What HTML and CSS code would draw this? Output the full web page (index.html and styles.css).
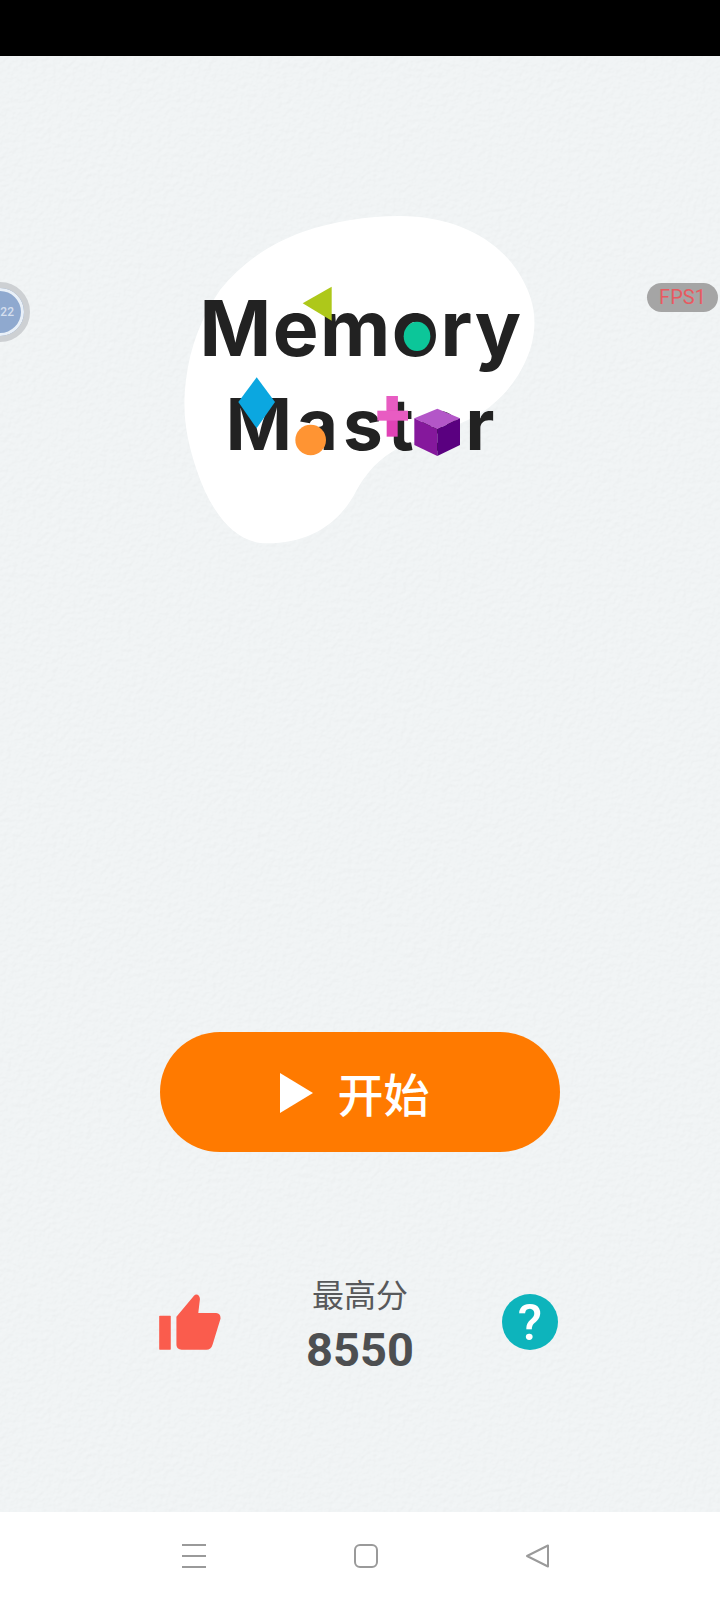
FILE: index.html
```html
<!DOCTYPE html>
<html lang="zh-CN">
<head>
    <meta charset="UTF-8">
    <meta name="viewport" content="width=device-width, initial-scale=1.0">
    <title>Memory Master</title>
    <link rel="stylesheet" href="styles.css">
</head>
<body>
    <div class="status-bar"></div>

    <main class="game">
        <svg class="paper" xmlns="http://www.w3.org/2000/svg" aria-hidden="true">
            <filter id="paperGrain" x="0" y="0" width="100%" height="100%">
                <feTurbulence type="fractalNoise" baseFrequency="0.2" numOctaves="3" seed="4" result="noise"/>
                <feDiffuseLighting in="noise" lighting-color="#f1f4f5" surfaceScale="0.5" diffuseConstant="1.06">
                    <feDistantLight azimuth="60" elevation="70"/>
                </feDiffuseLighting>
            </filter>
            <rect width="100%" height="100%" filter="url(#paperGrain)"/>
        </svg>

        <div class="float-ball"><span class="float-ball-num">22</span></div>
        <div class="fps">FPS1</div>

        <div class="logo">
            <svg class="logo-blob" viewBox="0 0 1140 1050" xmlns="http://www.w3.org/2000/svg" aria-hidden="true">
                <path fill="#ffffff" d="M690 48 C850 48 985 115 1050 225 C1095 300 1105 370 1080 450 C1055 520 1020 570 960 620 C900 665 800 700 720 730 C650 755 600 800 560 870 C510 970 420 1030 290 1030 C190 1030 120 930 80 810 C50 720 35 640 48 540 C60 440 95 350 150 270 C215 190 300 130 400 95 C490 65 590 48 690 48 Z"/>
            </svg>
            <h1 class="logo-title">
                <span class="logo-line logo-line-top">Memory</span>
                <span class="logo-line logo-line-bottom">Master</span>
            </h1>
            <svg class="logo-shapes" viewBox="0 0 1140 1050" xmlns="http://www.w3.org/2000/svg" aria-hidden="true">
                <polygon fill="#aec81a" points="398,310 485,260 485,362"/>
                <ellipse fill="#0cc699" cx="741" cy="409" rx="40" ry="44"/>
                <polygon fill="#0ba7e0" points="260,532 315,606 260,685 205,606"/>
                <circle fill="#ff9433" cx="422" cy="720" r="46"/>
                <rect fill="#e042b5" x="650" y="588" width="33" height="122"/>
                <rect fill="#e85cc2" x="622" y="632" width="92" height="30"/>
                <rect fill="#e85cc2" x="650" y="588" width="33" height="44"/>
                <polygon fill="#b356c8" points="733,655 802,626 870,655 802,688"/>
                <polygon fill="#85189c" points="733,655 802,688 802,768 733,735"/>
                <polygon fill="#5a0080" points="802,688 870,655 870,735 802,768"/>
            </svg>
        </div>

        <button class="start-btn" type="button">
            <svg class="start-icon" viewBox="0 0 33 40" xmlns="http://www.w3.org/2000/svg" aria-hidden="true">
                <polygon fill="#ffffff" points="0,0 33,20 0,40"/>
            </svg>
            <span>开始</span>
        </button>

        <div class="score-row">
            <svg class="thumb" viewBox="58 103 186 169" xmlns="http://www.w3.org/2000/svg" aria-hidden="true">
                <rect fill="#fa5c4d" x="58" y="169" width="35" height="102" rx="2"/>
                <path fill="#fa5c4d" d="M110 172 L163 108 C170 100 181 106 181 118 L176 160 L230 160 C240 160 244 168 243 178 L219 256 C216 266 210 271 200 271 L126 271 C116 271 110 265 110 255 Z"/>
            </svg>
            <div class="score">
                <div class="score-label">最高分</div>
                <div class="score-value">8550</div>
            </div>
            <div class="help">?</div>
        </div>
    </main>

    <nav class="nav-bar">
        <svg class="nav-icon" viewBox="0 0 26 26" xmlns="http://www.w3.org/2000/svg" aria-hidden="true">
            <path fill="none" stroke="#9a9a9a" stroke-width="2" d="M1 2 H25 M1 13 H25 M1 24 H25"/>
        </svg>
        <svg class="nav-icon" viewBox="0 0 26 26" xmlns="http://www.w3.org/2000/svg" aria-hidden="true">
            <rect fill="none" stroke="#9a9a9a" stroke-width="2" x="2" y="2" width="22" height="22" rx="5"/>
        </svg>
        <svg class="nav-icon" viewBox="0 0 26 26" xmlns="http://www.w3.org/2000/svg" aria-hidden="true">
            <path fill="none" stroke="#9a9a9a" stroke-width="2" stroke-linejoin="round" d="M2 13 L23 2.5 V23.5 Z"/>
        </svg>
    </nav>
</body>
</html>
```

FILE: styles.css
```css
html, body {
    margin: 0;
    padding: 0;
}

body {
    width: 720px;
    height: 1600px;
    display: flex;
    flex-direction: column;
    overflow: hidden;
    background-color: #fff;
    font-family: "Noto Sans", "Noto Sans CJK SC", sans-serif;
}

.status-bar {
    height: 56px;
    background-color: #000;
}

.game {
    position: relative;
    height: 1456px;
    padding-top: 144px;
    box-sizing: border-box;
    display: flex;
    flex-direction: column;
    align-items: center;
    background-color: #f1f4f5;
    overflow: hidden;
}

.paper {
    position: absolute;
    top: 0;
    left: 0;
    width: 100%;
    height: 100%;
    opacity: 0.4;
}

.float-ball {
    position: absolute;
    left: -30px;
    top: 226px;
    width: 60px;
    height: 60px;
    box-sizing: border-box;
    border: 6px solid #cdd0d3;
    border-radius: 50%;
    display: flex;
    align-items: center;
    justify-content: flex-end;
    background-color: #8fa9cf;
    box-shadow: inset 0 0 0 3px #e9f0f8;
}

.float-ball-num {
    margin-right: 10px;
    color: #d5dfee;
    font-family: Roboto, sans-serif;
    font-size: 12px;
    font-weight: 500;
}

.fps {
    position: absolute;
    left: 647px;
    top: 227px;
    width: 71px;
    height: 29px;
    border-radius: 15px;
    background-color: #a5a5a5;
    color: #e85a60;
    font-family: Roboto, sans-serif;
    font-size: 20px;
    line-height: 29px;
    text-align: center;
}

.logo {
    position: relative;
    width: 380px;
    height: 350px;
    flex: none;
}

.logo-blob,
.logo-shapes {
    position: absolute;
    top: 0;
    left: 0;
    width: 380px;
    height: 350px;
}

.logo-title {
    position: relative;
    margin: 0;
    padding-top: 80px;
    color: #222;
    font-family: Inter, "Noto Sans", sans-serif;
    font-weight: 700;
    text-align: center;
}

.logo-line {
    display: block;
    line-height: 96px;
}

.logo-line-top {
    padding-left: 2px;
    font-size: 77px;
    letter-spacing: 1.5px;
}

.logo-line-bottom {
    padding-left: 5px;
    font-size: 71px;
    letter-spacing: 5px;
}

.start-btn {
    position: relative;
    width: 400px;
    height: 120px;
    margin-top: 482px;
    padding: 0 11px 0 0;
    border: none;
    border-radius: 60px;
    display: flex;
    align-items: center;
    justify-content: center;
    gap: 25px;
    background-color: #ff7a00;
    color: #fff;
    font-family: "Noto Sans CJK SC", sans-serif;
    font-size: 46px;
    font-weight: 500;
}

.start-icon {
    width: 33px;
    height: 40px;
    margin-top: 1px;
}

.score-row {
    position: relative;
    width: 400px;
    margin-top: 119px;
    display: grid;
    grid-template-columns: 62px 1fr 62px;
    align-items: center;
}

.thumb {
    width: 62px;
    height: 56px;
    margin: 0 0 6px -1px;
}

.score {
    text-align: center;
}

.score-label {
    color: #58595b;
    font-family: "Noto Sans CJK SC", sans-serif;
    font-size: 32px;
    line-height: 44px;
}

.score-value {
    margin-top: 6px;
    color: #4d4f51;
    font-family: Roboto, sans-serif;
    font-size: 47px;
    font-weight: 700;
    line-height: 58px;
}

.help {
    justify-self: end;
    width: 56px;
    height: 56px;
    margin: 0 2px 6px 0;
    border-radius: 50%;
    background-color: #0db4bc;
    color: #fff;
    font-family: Roboto, sans-serif;
    font-size: 50px;
    font-weight: 500;
    line-height: 58px;
    text-align: center;
}

.nav-bar {
    height: 88px;
    box-sizing: border-box;
    padding-left: 12px;
    display: flex;
    align-items: center;
    justify-content: center;
    gap: 146px;
    background-color: #fff;
}

.nav-icon {
    width: 26px;
    height: 26px;
}
```
